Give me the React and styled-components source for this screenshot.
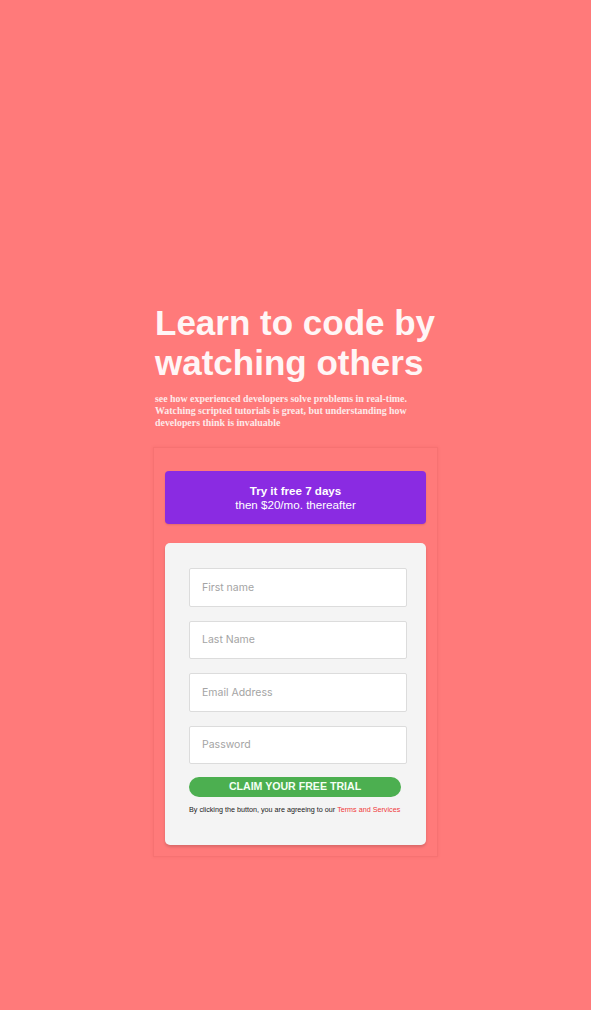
import React from "react";
import styled, { createGlobalStyle } from "styled-components";

const Global = createGlobalStyle`
  html, body { margin: 0; padding: 0; background: #ff7a7a; }
  * { box-sizing: border-box; }
`;

const Page = styled.main`
  min-height: 1010px;
  display: flex;
  justify-content: center;
  padding-top: 303px;
  font-family: "Liberation Sans", Arial, sans-serif;
`;

const Column = styled.div`
  width: 285px;
  display: flex;
  flex-direction: column;
`;

const Intro = styled.section`
  padding-left: 2px;
`;

const Title = styled.h1`
  margin: 0;
  width: 300px;
  font-size: 35px;
  line-height: 40px;
  font-weight: 700;
  color: #fff6f6;
`;

const Lead = styled.p`
  margin: 10px 0 0;
  width: 262px;
  font-family: "Liberation Serif", "Times New Roman", serif;
  font-weight: 700;
  font-size: 9.9px;
  line-height: 12px;
  color: #fde9e9;
`;

const Panel = styled.div`
  margin-top: 18px;
  padding: 23px 11px 11px;
  border: 1px solid rgba(220, 90, 90, 0.25);
  box-shadow: 0 0 3px rgba(200, 60, 60, 0.15);
  display: flex;
  flex-direction: column;
  gap: 19px;
`;

const Offer = styled.div`
  background: #8a2be2;
  border-radius: 4px;
  height: 53px;
  display: flex;
  flex-direction: column;
  align-items: center;
  justify-content: center;
  color: #fff;
  font-size: 11.6px;
  line-height: 13.5px;
  box-shadow: 0 1px 2px rgba(0, 0, 0, 0.12);
`;

const OfferStrong = styled.strong`
  font-weight: 700;
`;

const Form = styled.form`
  background: #f4f4f4;
  border-radius: 5px;
  padding: 25px 19px 29px 24px;
  box-shadow: 0 2px 3px rgba(0, 0, 0, 0.15);
  display: flex;
  flex-direction: column;
`;

const Fields = styled.div`
  display: flex;
  flex-direction: column;
  gap: 14px;
`;

const Input = styled.input`
  width: 100%;
  height: 38.5px;
  border: 1px solid #dcdcdc;
  border-radius: 2px;
  background: #fff;
  padding: 0 12px;
  font-family: Inter, "Noto Sans", sans-serif;
  font-size: 10.5px;
  color: #333;
  outline: none;
  &::placeholder { color: #a4a4a4; }
`;

const Submit = styled.button`
  margin-top: 13px;
  width: 212px;
  height: 19.5px;
  border: none;
  border-radius: 10px;
  background: #4caf50;
  color: #f4fff4;
  font-family: "Liberation Sans", Arial, sans-serif;
  font-weight: 700;
  font-size: 10.6px;
  line-height: 19.5px;
  padding: 0;
  cursor: pointer;
`;

const Terms = styled.p`
  margin: 7px 0 0;
  font-size: 7.2px;
  line-height: 12px;
  color: #1a1a1a;
  white-space: nowrap;
`;

const TermsLink = styled.a`
  color: #f03a3a;
  text-decoration: none;
`;

export default function App() {
  return (
    <>
      <Global />
      <Page>
        <Column>
          <Intro>
            <Title>Learn to code by watching others</Title>
            <Lead>
              see how experienced developers solve problems in real-time.
              Watching scripted tutorials is great, but understanding how
              developers think is invaluable
            </Lead>
          </Intro>
          <Panel>
            <Offer>
              <OfferStrong>Try it free 7 days</OfferStrong>
              <span>then $20/mo. thereafter</span>
            </Offer>
            <Form onSubmit={(e) => e.preventDefault()}>
              <Fields>
                <Input placeholder="First name" />
                <Input placeholder="Last Name" />
                <Input placeholder="Email Address" />
                <Input type="password" placeholder="Password" />
              </Fields>
              <Submit type="submit">CLAIM YOUR FREE TRIAL</Submit>
              <Terms>
                By clicking the button, you are agreeing to our{" "}
                <TermsLink href="#">Terms and Services</TermsLink>
              </Terms>
            </Form>
          </Panel>
        </Column>
      </Page>
    </>
  );
}
